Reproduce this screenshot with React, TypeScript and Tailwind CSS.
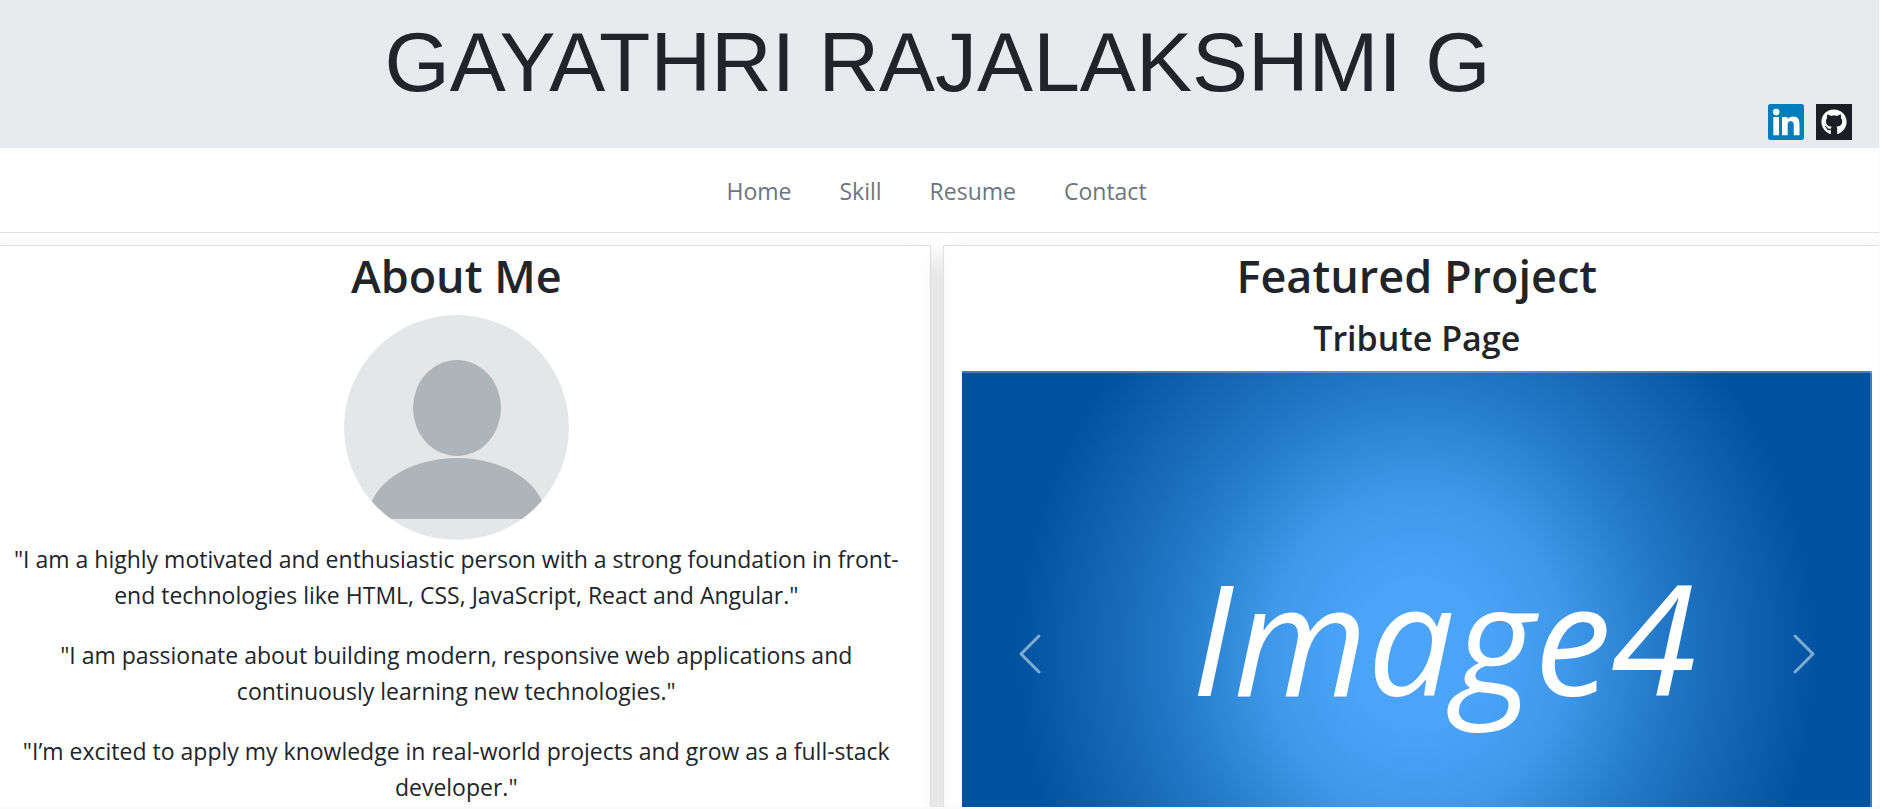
import { FaGithub } from "react-icons/fa";

const navLinks = ["Home", "Skill", "Resume", "Contact"];

const paragraphs = [
  "\"I am a highly motivated and enthusiastic person with a strong foundation in front-end technologies like HTML, CSS, JavaScript, React and Angular.\"",
  "\"I am passionate about building modern, responsive web applications and continuously learning new technologies.\"",
  "\"I’m excited to apply my knowledge in real-world projects and grow as a full-stack developer.\"",
];

function LinkedInLogo() {
  return (
    <svg viewBox="0 0 36 36" className="size-9" aria-hidden="true">
      <rect width="36" height="36" rx="2.5" fill="#007ebb" />
      <circle cx="8.2" cy="8.1" r="3.3" fill="#fff" />
      <path
        fill="#fff"
        d="M5.3 13h5.7v18.3H5.3zM14 13h5.5v2.5c.8-1.5 2.7-2.9 5.5-2.9 5.4 0 6.5 3.5 6.5 8.1v10.6h-5.7v-9.3c0-2.2 0-4.7-3-4.7s-3.1 2.3-3.1 4.6v9.4H14z"
      />
    </svg>
  );
}

function Avatar() {
  return (
    <svg viewBox="0 0 225 225" className="size-[225px]" role="img" aria-label="Profile">
      <defs>
        <clipPath id="avatar-clip">
          <circle cx="112.5" cy="112.5" r="112.5" />
        </clipPath>
      </defs>
      <g clipPath="url(#avatar-clip)">
        <rect width="225" height="225" fill="#e4e6e7" />
        <ellipse cx="113" cy="93" rx="44" ry="48" fill="#aeb4b7" />
        <path d="M24 204a89 61 0 0 1 178 0z" fill="#aeb4b7" />
      </g>
    </svg>
  );
}

function Chevron({ d }: { d: string }) {
  return (
    <svg viewBox="0 0 16 16" className="size-12" fill="#fff" aria-hidden="true">
      <path d={d} />
    </svg>
  );
}

export default function App() {
  return (
    <div className="flex h-screen flex-col overflow-hidden border-r border-b-2 border-[#fafafa] bg-white font-['Open_Sans',sans-serif] text-[23px] leading-9 text-[#212529]">
      <header className="shrink-0 bg-[#e7ebee] px-[27px] pt-5 pb-2">
        <h1 className="pr-1 text-center font-['Liberation_Sans',sans-serif] text-[84px] leading-[84px]">
          GAYATHRI RAJALAKSHMI G
        </h1>
        <div className="flex justify-end gap-3">
          <a href="#linkedin" aria-label="LinkedIn">
            <LinkedInLogo />
          </a>
          <a
            href="#github"
            aria-label="GitHub"
            className="flex size-9 items-center justify-center bg-[#1b1f23]"
          >
            <FaGithub className="size-[26px] text-white" />
          </a>
        </div>
      </header>

      <nav className="flex shrink-0 justify-center gap-12 border-b border-[#dee2e6] pt-[25px] pr-1.5 pb-[23px] text-[#6c757d]">
        {navLinks.map((label) => (
          <a key={label} href={`#${label.toLowerCase()}`}>
            {label}
          </a>
        ))}
      </nav>

      <main className="-mr-3 -ml-[18px] grid min-h-0 flex-1 grid-cols-2 gap-3 overflow-hidden pt-3 text-center">
        <section className="h-max min-h-[960px] border border-[#dee2e6] px-[18px] shadow-[0_12px_24px_rgba(0,0,0,0.15)]">
          <h2 className="pt-px pb-[11px] text-[45px] leading-[57px] font-semibold">About Me</h2>
          <div className="mb-px flex justify-center">
            <Avatar />
          </div>
          {paragraphs.map((text) => (
            <p key={text} className="mb-6">
              {text}
            </p>
          ))}
        </section>

        <section className="h-max min-h-[960px] border border-[#dee2e6] px-[18px] shadow-[0_12px_24px_rgba(0,0,0,0.15)]">
          <h2 className="pt-px pb-[11px] text-[45px] leading-[57px] font-semibold">Featured Project</h2>
          <h3 className="pt-px pb-[11px] text-[34px] leading-[44px] font-semibold">Tribute Page</h3>
          <div className="relative flex h-[566px] items-center justify-center bg-[radial-gradient(410px_450px_at_center,#4ba4f7_0%,#4ba4f7_16%,#3f98ea_36%,#2176c5_62%,#0053a0_97%)] pb-9 pl-[54px] shadow-[inset_0_2px_0_rgba(255,255,255,0.25),inset_-2px_0_0_rgba(255,255,255,0.25)]">
            <span className="text-[154px] leading-none text-white italic">Image4</span>
            <button
              type="button"
              aria-label="Previous"
              className="absolute inset-y-0 left-0 flex w-[15%] items-center justify-center opacity-50"
            >
              <Chevron d="M11.354 1.646a.5.5 0 0 1 0 .708L5.707 8l5.647 5.646a.5.5 0 0 1-.708.708l-6-6a.5.5 0 0 1 0-.708l6-6a.5.5 0 0 1 .708 0z" />
            </button>
            <button
              type="button"
              aria-label="Next"
              className="absolute inset-y-0 right-0 flex w-[15%] items-center justify-center opacity-50"
            >
              <Chevron d="M4.646 1.646a.5.5 0 0 1 .708 0l6 6a.5.5 0 0 1 0 .708l-6 6a.5.5 0 0 1-.708-.708L10.293 8 4.646 2.354a.5.5 0 0 1 0-.708z" />
            </button>
          </div>
        </section>
      </main>
    </div>
  );
}
